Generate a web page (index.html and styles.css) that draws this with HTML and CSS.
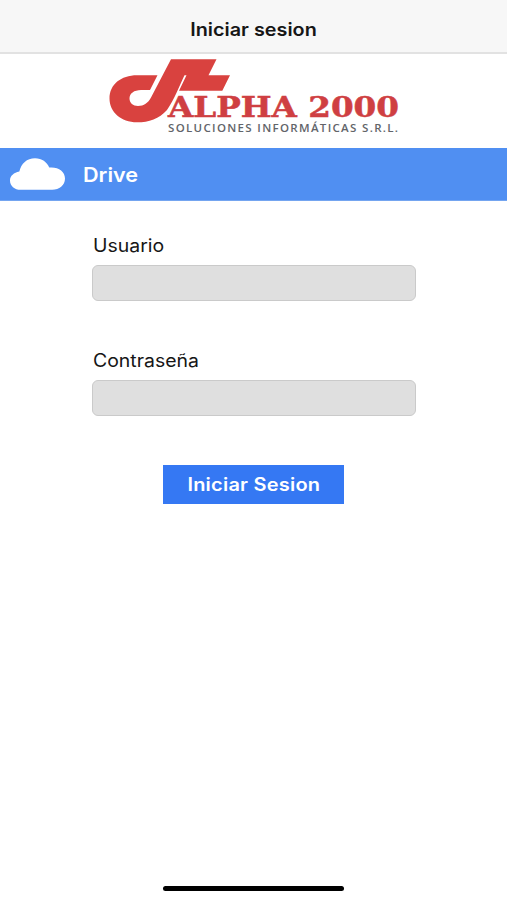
FILE: index.html
```html
<!DOCTYPE html>
<html lang="es">
<head>
<meta charset="utf-8">
<title>Iniciar sesion</title>
<link rel="stylesheet" href="styles.css">
</head>
<body>
<header class="navbar"><h1 class="nav-title">Iniciar sesion</h1></header>
<div class="brand">
<svg class="logo" viewBox="100 54 310 94" role="img" aria-label="Alpha 2000">
<path fill="#d9423f" d="M171 59.300H216.500L208.500 75.300H230L222.300 90.700H179L186.500 75.300H184.500C180 85 174 100 167 110C159 119 149 122.300 137 122.300C121 122.300 109.500 112 109.500 98.500C109.500 84.500 121 75.300 137 75.300H157.500L150 90H141C134 90 129.500 93.500 129.500 98.500C129.500 103 133 106 138 106C144 106 148 103 151 97.500Z"/>
<text class="logo-name" x="168" y="117" textLength="231" lengthAdjust="spacingAndGlyphs">ALPHA 2000</text>
<text class="logo-tag" x="168" y="132.200" textLength="230" lengthAdjust="spacing">SOLUCIONES INFORMÁTICAS S.R.L.</text>
</svg>
</div>
<div class="banner">
<svg class="cloud" viewBox="0 0 56 32"><path fill="#fff" d="M11 32C4.500 32 0 28 0 22.500C0 18 4 14.500 9.500 13.500C11.500 5.500 17 0 25.500 0C32.500 0 37.500 3.800 40 9.500C49 8.500 56 13.500 56 20.500C56 27.500 50 32 43 32Z"/></svg>
<span class="wide banner-title">Drive</span>
</div>
<main class="form">
<label class="label" for="user"><span class="wide">Usuario</span></label>
<input class="field" id="user" type="text">
<label class="label" for="pass"><span class="wide">Contraseña</span></label>
<input class="field" id="pass" type="password">
<button class="submit" type="button"><span class="submit-text">Iniciar Sesion</span></button>
</main>
<div class="home-bar"></div>
</body>
</html>
```
FILE: styles.css
```css
* { box-sizing: border-box; }
body { margin: 0; height: 900px; display: flex; flex-direction: column; background: #fff; color: #161616; font-family: Inter, "Liberation Sans", sans-serif; overflow: hidden; }
.navbar { height: 54px; padding-top: 18px; background: #f7f7f7; border-bottom: 2px solid #e2e2e2; text-align: center; }
.nav-title { margin: 0; font-size: 18px; line-height: 24px; font-weight: 600; transform: scaleX(1.1); }
.wide { display: inline-block; transform: scaleX(1.08); transform-origin: left; }
.brand { height: 94px; padding-left: 100px; }
.logo { display: block; width: 310px; height: 94px; }
.logo-name { font-family: "DejaVu Serif", serif; font-weight: 700; font-size: 28px; fill: #cf3f42; stroke: #cf3f42; stroke-width: .5px; }
.logo-tag { font-family: "Open Sans", sans-serif; font-weight: 600; font-size: 11.5px; fill: #626469; }
.banner { height: 53px; display: flex; align-items: center; gap: 18px; padding-left: 10px; background: #508ff2; border-bottom: 1px solid #74a5f0; }
.cloud { width: 55px; height: 32px; }
.banner-title { color: #fff; font-size: 20px; line-height: 24px; font-weight: 600; padding-top: 2px; }
.form { width: 324px; margin: 33px 0 0 92px; display: flex; flex-direction: column; }
.label { font-size: 18px; line-height: 24px; margin-bottom: 7px; padding-left: 1px; }
.field { height: 36px; margin: 0 0 48px; padding: 0 10px; border: 1px solid #cacaca; border-radius: 6px; background: #dfdfdf; font: inherit; }
.submit { width: 181px; height: 39px; margin: 1px 0 0 71px; padding: 0; border: 0; background: #3578f3; color: #fff; font: 600 18px/24px Inter, sans-serif; letter-spacing: .2px; }
.submit-text { display: inline-block; transform: scaleX(1.11); }
.home-bar { width: 181px; height: 5px; margin: auto auto 9px 163px; border-radius: 3px; background: #000; }
```
